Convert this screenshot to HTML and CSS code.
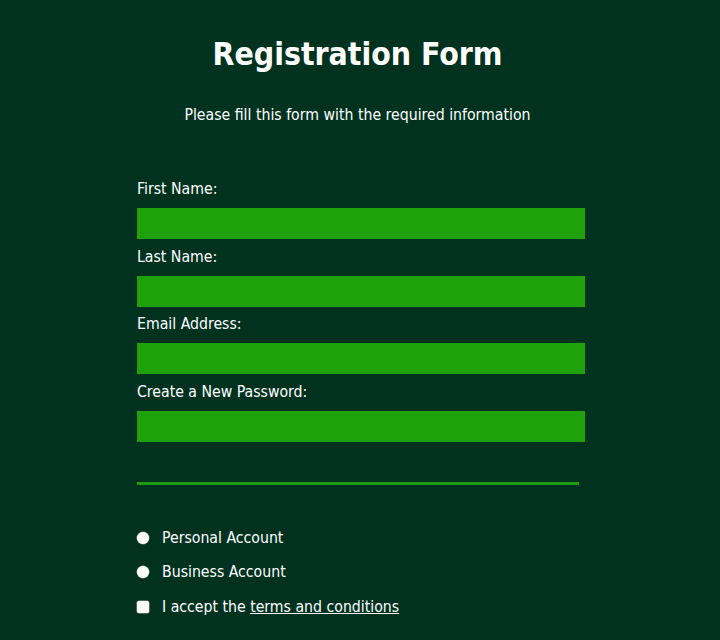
FILE: index.html
```html
<!DOCTYPE html>
<html>
<head>
<meta charset="utf-8">
<link rel="stylesheet" href="styles.css">
</head>
<body>
<div class="page">
  <h1 class="title">Registration Form</h1>
  <p class="subtitle">Please fill this form with the required information</p>
  <form class="form">
    <div class="fields">
      <label class="field"><span class="label">First Name:</span><input class="input" type="text"></label>
      <label class="field"><span class="label">Last Name:</span><input class="input" type="text"></label>
      <label class="field"><span class="label">Email Address:</span><input class="input" type="email"></label>
      <label class="field"><span class="label">Create a New Password:</span><input class="input" type="password"></label>
    </div>
    <hr class="rule">
    <div class="options">
      <label class="option"><span class="radio"></span>Personal Account</label>
      <label class="option"><span class="radio"></span>Business Account</label>
      <label class="option"><span class="check"></span>I accept the&nbsp;<a class="link" href="#">terms and conditions</a></label>
    </div>
  </form>
</div>
</body>
</html>
```

FILE: styles.css
```css
html, body {
  margin: 0;
  padding: 0;
  background: #013220;
  height: 100%;
}
body {
  font-family: "DejaVu Sans Condensed", "DejaVu Sans", sans-serif;
  color: #ffffff;
}
.page {
  padding: 36px 5px 0 0;
  display: flex;
  flex-direction: column;
  align-items: center;
}
.title {
  margin: 0;
  font-size: 31.7px;
  font-weight: bold;
  line-height: 36px;
}
.subtitle {
  margin: 33px 0 0;
  font-size: 15.7px;
  line-height: 20px;
}
.form {
  width: 448px;
  margin-top: 54px;
  margin-left: 7px;
}
.fields {
  display: flex;
  flex-direction: column;
  gap: 7.67px;
}
.field {
  display: flex;
  flex-direction: column;
  gap: 10px;
}
.label {
  font-size: 15.7px;
  line-height: 19px;
}
.input {
  display: block;
  box-sizing: border-box;
  width: 448px;
  height: 31px;
  border: none;
  margin: 0;
  background: #1fa10c;
  outline: none;
}
.rule {
  width: 442px;
  margin: 40px 0 0;
  height: 3px;
  border: none;
  background: #1f9a10;
}
.options {
  margin-top: 43px;
  display: flex;
  flex-direction: column;
  gap: 14.5px;
}
.option {
  display: flex;
  align-items: center;
  font-size: 15.7px;
  line-height: 20px;
}
.radio {
  width: 12px;
  height: 12px;
  border-radius: 50%;
  background: #ffffff;
  box-shadow: 0 0 0 0.5px #9a9a9a;
  margin: 0 13px 0 0;
}
.check {
  width: 12px;
  height: 12px;
  border-radius: 2px;
  background: #ffffff;
  box-shadow: 0 0 0 0.5px #9a9a9a;
  margin: 0 13px 0 0;
}
.link {
  color: #ffffff;
  text-decoration: underline;
}
```
